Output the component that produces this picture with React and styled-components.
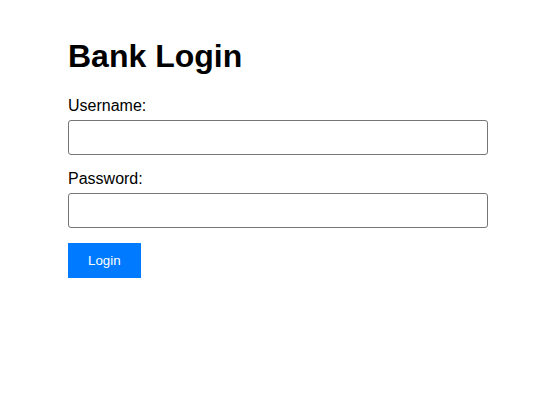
import React from "react";
import styled, { createGlobalStyle } from "styled-components";

const GlobalStyle = createGlobalStyle`
  html, body {
    margin: 0;
    padding: 0;
    background: #ffffff;
  }
  body {
    font-family: "Liberation Sans", Arial, sans-serif;
    color: #000000;
  }
`;

const Container = styled.div`
  width: 420px;
  margin: 0 auto;
  padding-top: 38px;
  box-sizing: border-box;
`;

const Title = styled.h1`
  margin: 0 0 22px 0;
  font-size: 32px;
  line-height: 37px;
  font-weight: 700;
`;

const Form = styled.form`
  display: flex;
  flex-direction: column;
  align-items: stretch;
`;

const Label = styled.label`
  display: block;
  font-size: 16px;
  line-height: 18px;
  margin-bottom: 5px;
`;

const Input = styled.input`
  display: block;
  width: 100%;
  height: 35px;
  box-sizing: border-box;
  margin: 0 0 15px 0;
  padding: 8px;
  border: 1px solid #767676;
  border-radius: 3px;
  font-family: "Liberation Sans", Arial, sans-serif;
  font-size: 13.33px;
  background: #ffffff;
  outline: none;
`;

const Button = styled.button`
  align-self: flex-start;
  height: 35px;
  padding: 0 20px;
  border: none;
  border-radius: 0;
  background: #007bff;
  color: #ffffff;
  font-family: "Liberation Sans", Arial, sans-serif;
  font-size: 13.33px;
  cursor: pointer;
`;

export default function App() {
  return (
    <>
      <GlobalStyle />
      <Container>
        <Title>Bank Login</Title>
        <Form onSubmit={(e) => e.preventDefault()}>
          <Label htmlFor="username">Username:</Label>
          <Input id="username" type="text" />
          <Label htmlFor="password">Password:</Label>
          <Input id="password" type="password" />
          <Button type="submit">Login</Button>
        </Form>
      </Container>
    </>
  );
}
